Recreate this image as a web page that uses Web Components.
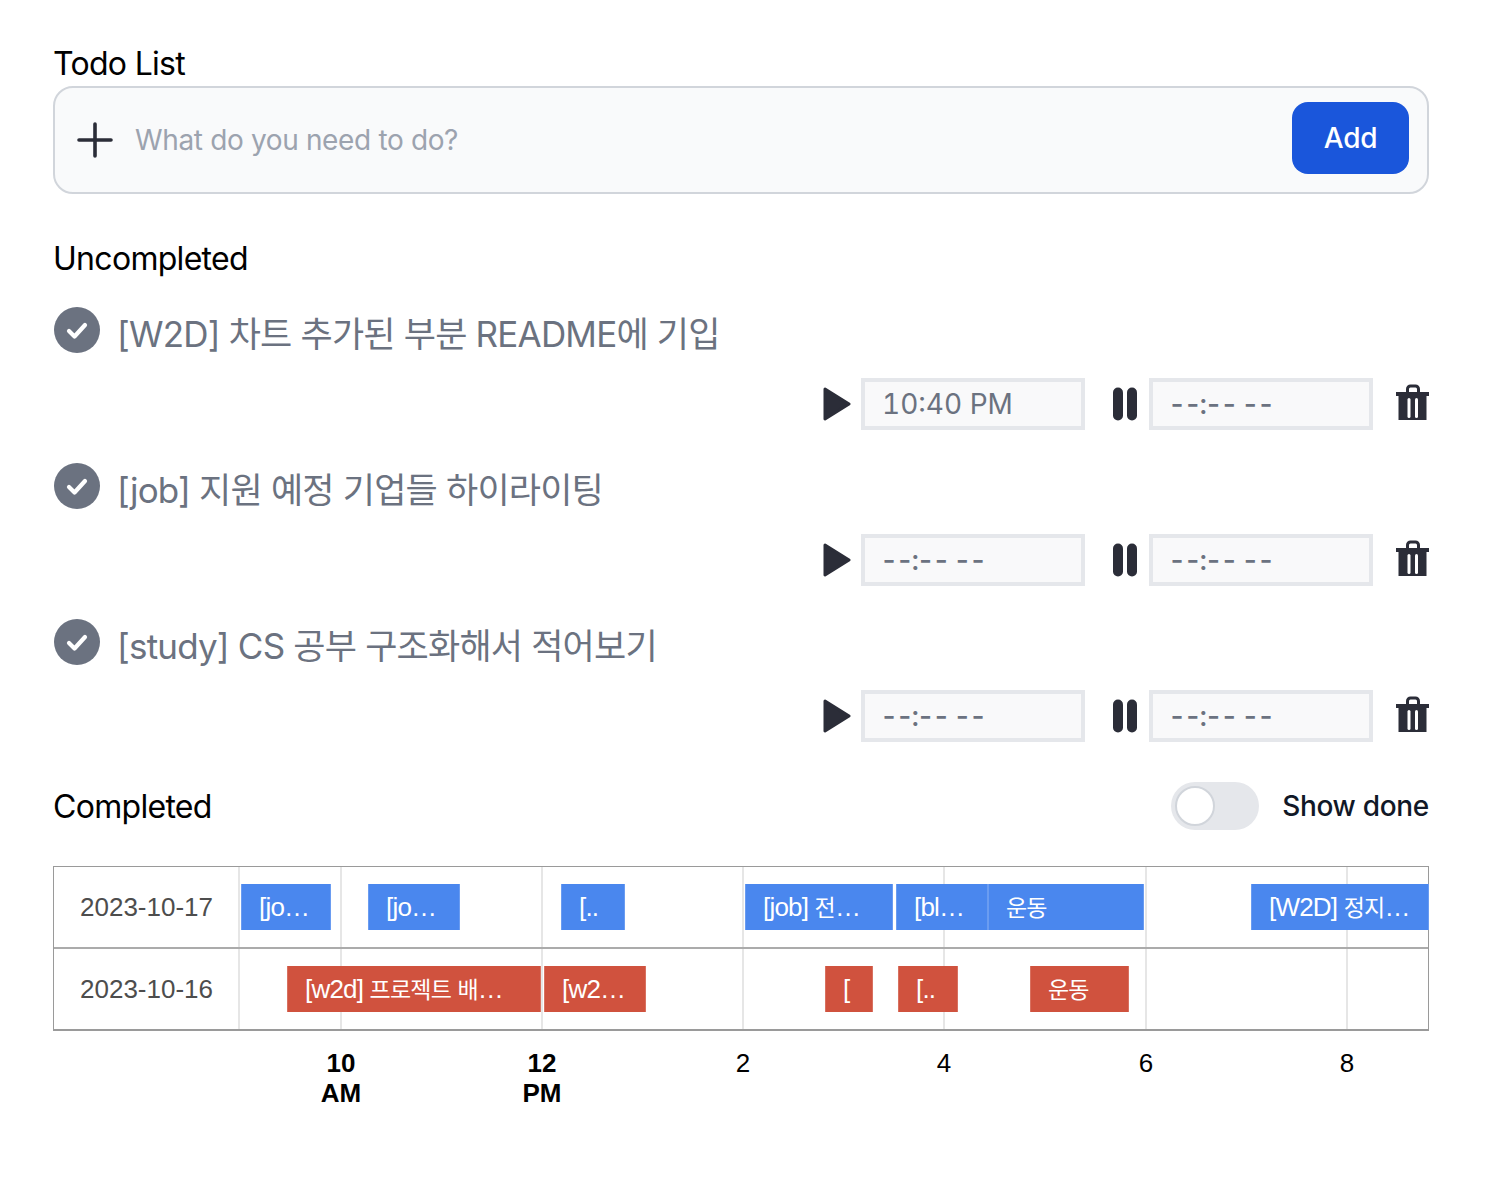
<!DOCTYPE html>
<html lang="ko">
<head>
<meta charset="utf-8" />
<title>Todo List</title>
<style>
  body {
    margin: 0;
    background: white;
    font-family: Inter, "Noto Sans CJK KR", sans-serif;
  }
</style>
</head>
<body>
<app-root></app-root>
<script>
const ICON_COLOR = "#2b2d38";

const todos = [
  { title: "[W2D] 차트 추가된 부분 README에 기입", start: "10:40 PM", end: "--:-- --" },
  { title: "[job] 지원 예정 기업들 하이라이팅", start: "--:-- --", end: "--:-- --" },
  { title: "[study] CS 공부 구조화해서 적어보기", start: "--:-- --", end: "--:-- --" },
];

const timelineRows = [
  {
    label: "2023-10-17",
    color: "#4a87ee",
    bars: [
      { from: 241, to: 331, text: "[jo…" },
      { from: 368, to: 460, text: "[jo…" },
      { from: 561, to: 625, text: "[.." },
      { from: 745, to: 893, text: "[job] 전…" },
      { from: 896, to: 988, text: "[bl…" },
      { from: 988, to: 1144, text: "운동" },
      { from: 1251, to: 1429, text: "[W2D] 정지…" },
    ],
  },
  {
    label: "2023-10-16",
    color: "#d0523e",
    bars: [
      { from: 287, to: 541, text: "[w2d] 프로젝트 배…" },
      { from: 544, to: 646, text: "[w2…" },
      { from: 825, to: 873, text: "[" },
      { from: 898, to: 958, text: "[.." },
      { from: 1030, to: 1129, text: "운동" },
    ],
  },
];

const timelineTicks = [
  { x: 341, lines: ["10", "AM"], bold: true },
  { x: 542, lines: ["12", "PM"], bold: true },
  { x: 743, lines: ["2"] },
  { x: 944, lines: ["4"] },
  { x: 1146, lines: ["6"] },
  { x: 1347, lines: ["8"] },
];

class SectionHeading extends HTMLElement {
  constructor() {
    super();
    this.attachShadow({ mode: "open" });
    this.shadowRoot.innerHTML = `
      <style>
        :host {
          display: block;
          font-size: 32px;
          line-height: 36px;
          font-weight: 400;
          letter-spacing: -0.7px;
          color: black;
        }
      </style>
      <slot></slot>
    `;
  }
}

class TodoInput extends HTMLElement {
  constructor() {
    super();
    this.attachShadow({ mode: "open" });
    this.shadowRoot.innerHTML = `
      <style>
        :host {
          display: flex;
          align-items: center;
          box-sizing: border-box;
          height: 108px;
          padding: 0 18px 0 22px;
          background: #f9fafb;
          border: 2px solid #d1d5db;
          border-radius: 20px;
        }
        svg { flex: none; display: block; margin-right: 22px; }
        .placeholder { flex: 1; font-size: 28px; letter-spacing: -0.35px; color: #9ca3af; }
        .add {
          width: 117px;
          height: 72px;
          margin-bottom: 4px;
          display: flex;
          align-items: center;
          justify-content: center;
          background: #1a56db;
          border-radius: 16px;
          color: white;
          font-size: 28px;
          font-weight: 500;
          letter-spacing: -0.3px;
        }
      </style>
      <svg width="36" height="36" viewBox="0 0 36 36" fill="none" stroke="${ICON_COLOR}" stroke-width="3.6" stroke-linecap="round">
        <path d="M18 2v32M2 18h32" />
      </svg>
      <div class="placeholder">What do you need to do?</div>
      <div class="add">Add</div>
    `;
  }
}

class TimeField extends HTMLElement {
  constructor() {
    super();
    this.attachShadow({ mode: "open" });
    this.shadowRoot.innerHTML = `
      <style>
        :host {
          display: flex;
          align-items: center;
          box-sizing: border-box;
          width: 224px;
          height: 52px;
          padding-left: 17px;
          background: #f9f9fa;
          border: 4px solid #e5e7eb;
          color: #6b7280;
          font-size: 28px;
          font-variant-numeric: tabular-nums;
        }
        :host([empty]) { padding-left: 15px; font-weight: 500; letter-spacing: -2.4px; }
      </style>
      <slot></slot>
    `;
  }
}

class TodoItem extends HTMLElement {
  static get observedAttributes() {
    return ["title", "start", "end"];
  }

  constructor() {
    super();
    this.attachShadow({ mode: "open" });
  }

  connectedCallback() {
    this.render();
  }

  attributeChangedCallback() {
    this.render();
  }

  timeField(value) {
    const empty = value.startsWith("--") ? " empty" : "";
    return `<time-field${empty}>${value}</time-field>`;
  }

  render() {
    this.shadowRoot.innerHTML = `
      <style>
        :host { display: block; }
        .head {
          display: flex;
          align-items: flex-start;
          height: 74px;
        }
        .check { flex: none; display: block; margin: 3px 17px 0 1px; }
        .title {
          font-size: 35px;
          line-height: 60px;
          letter-spacing: -0.8px;
          color: #6b7280;
        }
        .times {
          display: flex;
          align-items: center;
          justify-content: flex-end;
          height: 52px;
        }
        .times svg { flex: none; display: block; }
        .play { margin-right: 10px; }
        .pause { margin: 0 12px 0 28px; }
        .trash { margin: 0 0 4px 23px; }
      </style>
      <div class="head">
        <svg class="check" width="46" height="46" viewBox="0 0 46 46">
          <circle cx="23" cy="23" r="23" fill="#6b7280" />
          <path d="M15 24l5.500 5.500L31 18" fill="none" stroke="white" stroke-width="4.200" stroke-linecap="round" stroke-linejoin="round" />
        </svg>
        <div class="title">${this.getAttribute("title")}</div>
      </div>
      <div class="times">
        <svg class="play" width="28" height="34" viewBox="0 0 28 34">
          <path d="M2 2L26 17L2 32Z" fill="${ICON_COLOR}" stroke="${ICON_COLOR}" stroke-width="3" stroke-linejoin="round" />
        </svg>
        ${this.timeField(this.getAttribute("start"))}
        <svg class="pause" width="24" height="34" viewBox="0 0 24 34" fill="${ICON_COLOR}">
          <rect x="0" y="0.500" width="10" height="33" rx="5" />
          <rect x="14" y="0.500" width="10" height="33" rx="5" />
        </svg>
        ${this.timeField(this.getAttribute("end"))}
        <svg class="trash" width="33" height="36" viewBox="0 0 33 36">
          <path d="M11.500 8V5a3 3 0 0 1 3-3h5a3 3 0 0 1 3 3v3" fill="none" stroke="${ICON_COLOR}" stroke-width="3" />
          <rect x="0" y="8" width="33" height="4" fill="${ICON_COLOR}" />
          <path d="M2.500 12h28v24h-28z" fill="${ICON_COLOR}" />
          <rect x="11.500" y="14" width="3" height="20" rx="1.500" fill="white" />
          <rect x="19" y="14" width="3" height="20" rx="1.500" fill="white" />
        </svg>
      </div>
    `;
  }
}

class ToggleSwitch extends HTMLElement {
  constructor() {
    super();
    this.attachShadow({ mode: "open" });
    this.shadowRoot.innerHTML = `
      <style>
        :host {
          display: flex;
          align-items: center;
          font-size: 28px;
          font-weight: 500;
          letter-spacing: -0.3px;
          color: #111827;
        }
        .track {
          position: relative;
          width: 88px;
          height: 48px;
          margin-right: 23px;
          background: #e5e7eb;
          border-radius: 24px;
        }
        .knob {
          position: absolute;
          left: 4px;
          top: 4px;
          box-sizing: border-box;
          width: 40px;
          height: 40px;
          background: white;
          border: 2px solid #d1d5db;
          border-radius: 50%;
        }
      </style>
      <div class="track"><div class="knob"></div></div>
      <slot></slot>
    `;
  }
}

class TimelineChart extends HTMLElement {
  constructor() {
    super();
    this.attachShadow({ mode: "open" });
  }

  connectedCallback() {
    // chart starts at x=53, all data is in page coordinates
    const originX = 53;
    const labelWidth = 186;
    const rows = timelineRows
      .map((row) => {
        const bars = row.bars
          .map((bar) => {
            const text = bar.text.replace(/[가-힣]+/g, (m) => `<span class="ko">${m}</span>`);
            return `<div class="bar" style="left:${bar.from - originX - 1}px;width:${bar.to - bar.from}px;background:${row.color}">${text}</div>`;
          })
          .join("");
        return `
          <div class="row">
            <div class="label">${row.label}</div>
            ${bars}
          </div>
        `;
      })
      .join("");
    const grid = [239, ...timelineTicks.map((tick) => tick.x)]
      .map((x) => `<div class="line" style="left:${x - originX - 2}px"></div>`)
      .join("");
    const ticks = timelineTicks
      .map(
        (tick) => `<div class="tick${tick.bold ? " bold" : ""}" style="left:${tick.x - originX}px">${tick.lines.join("<br>")}</div>`
      )
      .join("");

    this.shadowRoot.innerHTML = `
      <style>
        :host {
          display: block;
          font-family: "Liberation Sans", "Noto Sans CJK KR", sans-serif;
          font-size: 26px;
        }
        .chart {
          position: relative;
          box-sizing: border-box;
          height: 165px;
          border: solid #9a9a9a;
          border-width: 1px 1px 2px 1px;
        }
        .row {
          position: relative;
          box-sizing: border-box;
          height: 80px;
          display: flex;
          align-items: center;
          padding-left: 26px;
        }
        .row + .row { border-top: 2px solid #ababab; height: 82px; }
        .label { color: #4d4d4d; width: ${labelWidth - 26}px; }
        .line {
          position: absolute;
          top: 0;
          bottom: 0;
          width: 2px;
          background: #e6e6e6;
        }
        .bar {
          position: absolute;
          top: 17px;
          height: 46px;
          box-sizing: border-box;
          padding-left: 18px;
          line-height: 46px;
          letter-spacing: -0.8px;
          color: white;
          white-space: nowrap;
          overflow: hidden;
          box-shadow: inset 1px 0 rgba(255, 255, 255, 0.18), inset -1px 0 rgba(255, 255, 255, 0.18);
        }
        .ko { font-size: 23px; }
        .axis { position: relative; height: 70px; margin-top: 17px; }
        .tick {
          position: absolute;
          top: 0;
          transform: translateX(-50%);
          line-height: 30px;
          text-align: center;
          color: black;
        }
        .bold { font-weight: 700; }
      </style>
      <div class="chart">
        ${grid}
        ${rows}
      </div>
      <div class="axis">${ticks}</div>
    `;
  }
}

class AppRoot extends HTMLElement {
  constructor() {
    super();
    this.attachShadow({ mode: "open" });
  }

  connectedCallback() {
    const items = todos
      .map(
        (todo) => `<todo-item title="${todo.title}" start="${todo.start}" end="${todo.end}"></todo-item>`
      )
      .join("");
    this.shadowRoot.innerHTML = `
      <style>
        :host {
          display: block;
          box-sizing: border-box;
          width: 1490px;
          padding: 46px 61px 0 53px;
        }
        todo-input { margin-top: 4px; }
        .uncompleted { margin-top: 47px; margin-bottom: 27px; }
        .list { display: flex; flex-direction: column; gap: 30px; }
        .done-head {
          display: flex;
          align-items: center;
          justify-content: space-between;
          height: 48px;
          margin-top: 40px;
          margin-bottom: 36px;
        }
        .done-head section-heading { margin-top: 2px; }
      </style>
      <section-heading>Todo List</section-heading>
      <todo-input></todo-input>
      <section-heading class="uncompleted">Uncompleted</section-heading>
      <div class="list">${items}</div>
      <div class="done-head">
        <section-heading>Completed</section-heading>
        <toggle-switch>Show done</toggle-switch>
      </div>
      <timeline-chart></timeline-chart>
    `;
  }
}

customElements.define("section-heading", SectionHeading);
customElements.define("todo-input", TodoInput);
customElements.define("time-field", TimeField);
customElements.define("todo-item", TodoItem);
customElements.define("toggle-switch", ToggleSwitch);
customElements.define("timeline-chart", TimelineChart);
customElements.define("app-root", AppRoot);
</script>
</body>
</html>
